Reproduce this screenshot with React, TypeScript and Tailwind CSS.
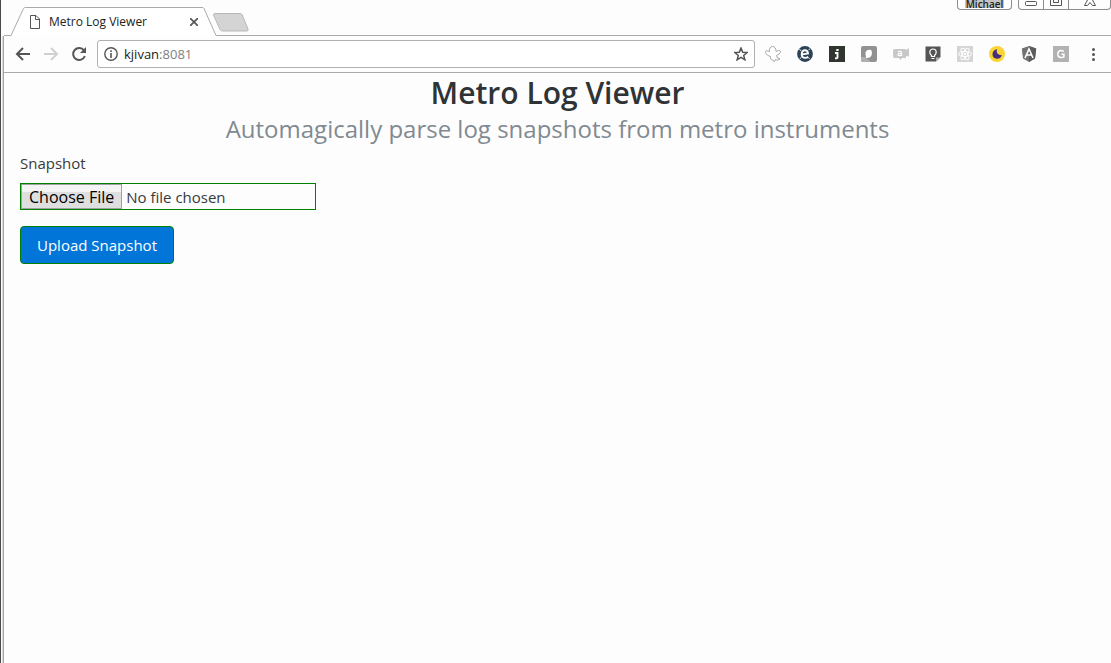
import React from "react";

type IconProps = { children: React.ReactNode; label: string };

function Extension({ children, label }: IconProps) {
  return (
    <button type="button" aria-label={label} className="size-4 shrink-0">
      <svg viewBox="0 0 16 16" className="block size-4">
        {children}
      </svg>
    </button>
  );
}

function WindowControls() {
  return (
    <div className="flex h-[10px] items-start gap-[6px]">
      <button
        type="button"
        className="flex h-[10px] w-[55px] items-end justify-center rounded-b border border-t-0 border-[#8c8c8c] bg-white pb-px text-[10px] leading-[8px] font-semibold text-[#222]"
      >
        <span className="bg-[#c4c4c4] px-px">Michael</span>
      </button>
      <div className="flex h-[10px] w-[93px] rounded-b border border-t-0 border-[#8c8c8c]">
        <button type="button" aria-label="Minimize" className="flex w-[25px] justify-center border-r border-[#8c8c8c]">
          <svg viewBox="0 0 12 9" className="h-[9px] w-3" fill="none" stroke="#555">
            <rect x="0.5" y="1.5" width="11" height="4" rx="1" />
          </svg>
        </button>
        <button type="button" aria-label="Maximize" className="flex w-[25px] justify-center border-r border-[#8c8c8c]">
          <svg viewBox="0 0 12 9" className="h-[9px] w-3" fill="none" stroke="#555">
            <path d="M.5 0v5.500h11V0M3.500 0v2.500h5V0" />
          </svg>
        </button>
        <button type="button" aria-label="Close" className="flex flex-1 justify-center">
          <svg viewBox="0 0 12 9" className="h-[9px] w-3" fill="none" stroke="#555">
            <path d="M3.500 0L.5 5.500H3.500L6 2.500L8.500 5.500H11.500L8.500 0" />
          </svg>
        </button>
      </div>
    </div>
  );
}

function TabStrip() {
  return (
    <header className="flex h-9 items-start justify-between border-b border-[#a9a9a9] pl-[6px]">
      <div className="flex items-start">
        <div className="relative flex h-9 w-[208px] items-center pt-2 pl-5">
          <svg viewBox="0 0 208 36" className="absolute inset-0 h-9 w-[208px]">
            <path d="M0 35.500H1L14 8.500Q14.500 7.500 16 7.500H192Q194 7.500 194.500 8.500L207 35.500H208V36H0Z" fill="#fff" />
            <path d="M0 35.500H1L13.500 8.500Q14 7.500 15.500 7.500H192Q193.500 7.500 194 8.500L206 35.500H208" fill="none" stroke="#a9a9a9" />
          </svg>
          <svg viewBox="0 0 10 14" className="relative h-[14px] w-[10px]" fill="none" stroke="#555">
            <path d="M.5.5H6L9.500 4V13.500H.5ZM5.500.5V4.500H9.500" />
          </svg>
          <span className="relative ml-[9px] flex-1 text-[12px] leading-4 text-[#222]">Metro Log Viewer</span>
          <button type="button" aria-label="Close tab" className="relative mr-5">
            <svg viewBox="0 0 8 8" className="size-2" stroke="#555" strokeWidth="1.700">
              <path d="M0 0L8 8M8 0L0 8" />
            </svg>
          </button>
        </div>
        <button type="button" aria-label="New tab" className="mt-[13px] -ml-[5px]">
          <svg viewBox="0 0 36 19" className="block h-[19px] w-9">
            <path d="M2 .5H27Q28.500.5 29 1.500L35 16Q35.500 18 34 18H9.500Q8 18 7 16.500L.5 2Q.5.5 2 .5Z" fill="#d4d4d4" stroke="#b8b8b8" />
          </svg>
        </button>
      </div>
      <WindowControls />
    </header>
  );
}

function Toolbar() {
  return (
    <nav aria-label="Browser" className="flex h-[37px] items-center gap-[10px] border-b border-[#a9a9a9] pr-[10px] pl-[11px]">
      <div className="flex gap-3">
        <button type="button" aria-label="Back">
          <svg viewBox="0 0 16 16" className="size-4" fill="none" stroke="#555" strokeWidth="2">
            <path d="M15 8H2.500M8 2L2 8L8 14" />
          </svg>
        </button>
        <button type="button" aria-label="Forward" disabled>
          <svg viewBox="0 0 16 16" className="size-4" fill="none" stroke="#d0d0d0" strokeWidth="2">
            <path d="M1 8H13.500M8 2L14 8L8 14" />
          </svg>
        </button>
        <button type="button" aria-label="Reload">
          <svg viewBox="0 0 16 16" className="size-4">
            <path d="M13 4.500A6 6 0 1 0 13.800 10" fill="none" stroke="#555" strokeWidth="2" />
            <path d="M15 1V7H9Z" fill="#555" />
          </svg>
        </button>
      </div>
      <div className="flex h-7 flex-1 items-center rounded-[3px] border border-[#b0b0b0] bg-white pr-[6px] pl-[6px]">
        <svg viewBox="0 0 14 14" className="size-[14px] shrink-0" fill="none" stroke="#555">
          <circle cx="7" cy="7" r="6.200" strokeWidth="1.400" />
          <path d="M7 6V11M7 3.300V5" strokeWidth="1.600" />
        </svg>
        <a href="#" className="ml-[6px] flex-1 text-[13px] leading-5 text-[#222]">
          kjivan<span className="text-[#808080]">:8081</span>
        </a>
        <button type="button" aria-label="Bookmark this page">
          <svg viewBox="0 0 14 14" className="size-[14px]" fill="none" stroke="#555" strokeWidth="1.500">
            <path d="M7 1L8.700 5.200L13.200 5.500L9.700 8.400L10.900 12.800L7 10.400L3.100 12.800L4.300 8.400L.8 5.500L5.300 5.200Z" />
          </svg>
        </button>
      </div>
      <div className="flex gap-4">
        <Extension label="Ghost">
          <path
            d="M4.500 5.500C4 2.500 5.500.5 7.500.5C10 .5 11 2.500 11 5.500C12 5.500 13 4 14.500 4.500C16 5.500 15.500 7 14 8L11.500 9.500L12.500 12L15 13C13.500 14.500 11.500 14 10.500 13.500L9.500 15.500L7.500 14C6 14 5.500 12.500 5.500 10.500C3.500 10 1 8.500.5 6.500C.3 5 2 4.300 3 5.200Z"
            fill="#fff"
            stroke="#a4a4a4"
          />
        </Extension>
        <Extension label="E tools">
          <circle cx="8" cy="8" r="7.900" fill="#2b4257" />
          <path d="M5.500 8.400L11 7.400C10.800 5.400 9.600 4.300 7.900 4.300C5.900 4.300 4.700 5.900 4.700 8.200C4.700 10.500 6 11.900 8.200 11.900C9.500 11.900 10.400 11.500 11.100 10.700" fill="none" stroke="#fff" strokeWidth="1.900" />
          <path d="M2.300 3.300L4.300 4.800M11.600 3.800L13 2.800M2.500 13L4.300 11.300M12.500 12.800L11.500 11.500" stroke="#fff" />
        </Extension>
        <Extension label="JSON viewer">
          <path d="M0 0H16V16H0Z" fill="#303530" />
          <path d="M6 7H8.500V11.500Q8.500 12.500 6 12.300" fill="none" stroke="#fff" strokeWidth="1.900" />
          <path d="M7.300 3H9.600V5H7.300Z" fill="#fff" />
        </Extension>
        <Extension label="Feather">
          <rect width="16" height="16" rx="2" fill="#929292" />
          <path d="M0 11H4L10 16H2Q0 16 0 14Z" fill="#b0b0b0" />
          <path d="M10 4C6.500 3.300 4.500 5 4.500 7.500C4.500 9 5 10 5 12C8 12.200 10.300 11 10.800 8.500C11.200 6.500 10.800 5 10 4Z" fill="#fff" />
        </Extension>
        <Extension label="Chat">
          <path d="M1.500 3H12L13 4L15 2.500H16V10.500L13 10V12H9L7.500 14L6 12H1.500Q0 12 0 10V5Q0 3 1.500 3Z" fill="#c8c8c8" />
          <path d="M5 5.800C8 5 8.500 5.600 8.500 7V10M8.500 7.600C5.500 7.200 4.800 8 5 9C5.500 10.100 8 9.700 8.500 8.500" fill="none" stroke="#fff" strokeWidth="1.200" />
        </Extension>
        <Extension label="Ideas">
          <path d="M.5.5H15.500V11L11 15.500H.5Z" fill="#555" />
          <path d="M11 15.500V11.500H15.500Z" fill="#aaa" />
          <path d="M6.500 9.500Q4.800 8 4.800 6.200A3.200 3.200 0 0 1 11.200 6.200Q11.200 8 9.500 9.500V10.500H6.500ZM6.500 12.500H9.500" fill="none" stroke="#fff" strokeWidth="1.200" />
        </Extension>
        <Extension label="React tools">
          <path d="M0 0H16V16H0Z" fill="#d5d5d5" />
          <g fill="none" stroke="#fff">
            <ellipse cx="8" cy="8" rx="6.500" ry="2.500" />
            <ellipse cx="8" cy="8" rx="6.500" ry="2.500" transform="rotate(60 8 8)" />
            <ellipse cx="8" cy="8" rx="6.500" ry="2.500" transform="rotate(120 8 8)" />
          </g>
          <circle cx="8" cy="8" r="1.300" fill="#fff" />
        </Extension>
        <Extension label="Night mode">
          <circle cx="8" cy="8" r="8" fill="#fad433" />
          <path d="M8 3.200Q6.500 8.500 12.800 9.300Q11.500 13 7.800 12.800Q3.500 12.300 3.500 8.200Q3.700 4 8 3.200Z" fill="#46307c" />
        </Extension>
        <Extension label="Angular tools">
          <path d="M8 0L15.200 2.500L14 12.500L8 16L2 12.500L.8 2.500Z" fill="#727272" />
          <path d="M8 0L15.200 2.500L14 12.500L8 16Z" fill="#5c5c5c" />
          <path d="M4 12L8 3L12 12M5.500 9H10.500" fill="none" stroke="#fff" strokeWidth="1.600" />
        </Extension>
        <Extension label="G tools">
          <path d="M0 0H16V16H0Z" fill="#b2b2b2" />
          <path d="M10.800 5.300Q9.500 4.500 8.300 4.500Q4.800 4.700 4.800 8.100Q4.800 11.500 8.200 11.600Q9.800 11.600 10.900 10.900V8.300H8.500" fill="none" stroke="#fff" strokeWidth="1.500" />
        </Extension>
        <Extension label="Browser menu">
          <g fill="#555">
            <circle cx="8.500" cy="3.500" r="1.500" />
            <circle cx="8.500" cy="8.500" r="1.500" />
            <circle cx="8.500" cy="13.500" r="1.500" />
          </g>
        </Extension>
      </div>
    </nav>
  );
}

function LogViewer() {
  return (
    <main className="px-4 text-[#373a3c]">
      <h1 className="text-center text-[30px] leading-10 font-semibold text-[#2f3336]">Metro Log Viewer</h1>
      <h2 className="text-center text-[24px] leading-8 text-[#818a91]">
        Automagically parse log snapshots from metro instruments
      </h2>
      <form className="mt-[6px] flex flex-col items-start" onSubmit={(e) => e.preventDefault()}>
        <label htmlFor="snapshot" className="text-[15px] leading-6">
          Snapshot
        </label>
        <input
          id="snapshot"
          type="file"
          className="mt-2 h-[27px] w-[296px] border border-[#008000] text-[15px] leading-5 file:mr-1 file:h-[25px] file:border file:border-solid file:border-[#a0a0a0] file:bg-linear-to-b file:from-[#f4f4f4] file:from-30% file:to-[#dfdfdf] file:to-30% file:px-[7px] file:text-[16px] file:leading-5 file:text-black"
        />
        <button
          type="submit"
          className="mt-4 h-[38px] rounded border border-[#008000] bg-[#0275d8] px-4 text-[15px] leading-6 text-white"
        >
          Upload Snapshot
        </button>
      </form>
    </main>
  );
}

export default function App() {
  return (
    <div className="flex min-h-screen border-l border-[#4a4a4a] bg-[#fdfdfd] font-['Open_Sans','Noto_Sans',sans-serif]">
      <div className="mt-9 ml-px w-[2px] shrink-0 border-r border-[#a9a5a3] bg-[#dcd7d4]" />
      <div className="min-w-0 flex-1">
        <TabStrip />
        <Toolbar />
        <LogViewer />
      </div>
    </div>
  );
}
